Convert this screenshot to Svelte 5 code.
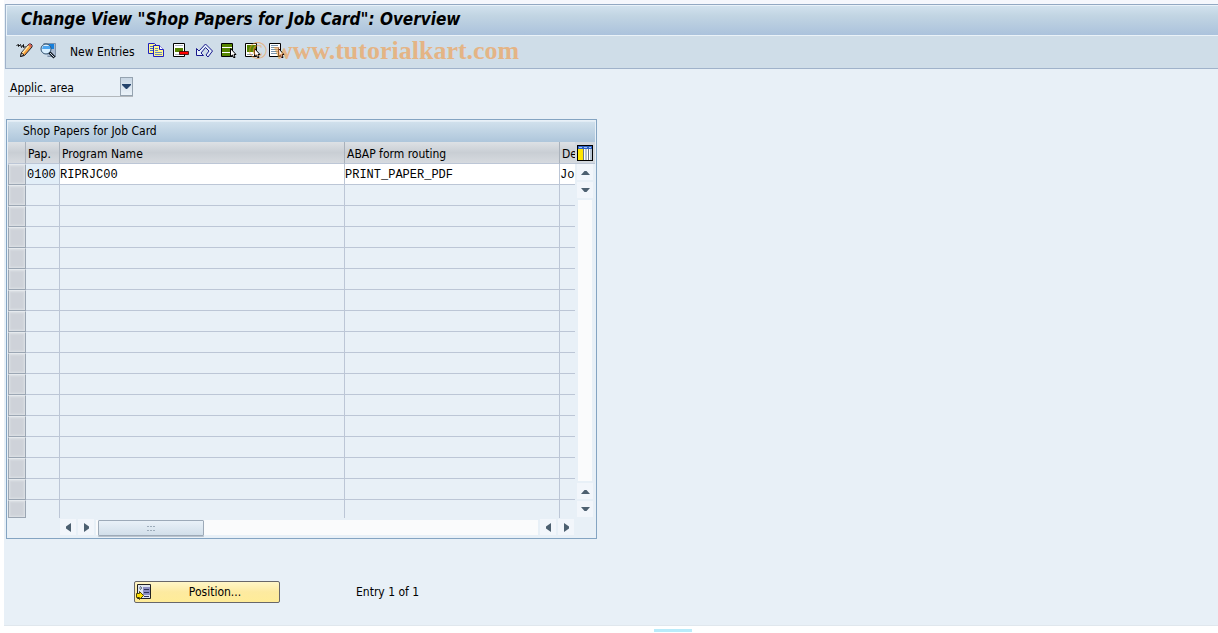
<script>
  const columns = ['Pap.', 'Program Name', 'ABAP form routing', 'De'];

  const entries = [
    { pap: '0100', program: 'RIPRJC00', routing: 'PRINT_PAPER_PDF', desc: 'Job' },
  ];

  // the control always shows 17 lines, filled or not
  const VISIBLE_ROWS = 17;
  const rows = Array.from({ length: VISIBLE_ROWS }, (_, i) => entries[i] ?? null);

  const tools = ['copy', 'delete', 'undo', 'selectAll', 'selectBlock', 'deselect'];
  const toolLabels = {
    copy: 'Copy As...',
    delete: 'Delete',
    undo: 'Undo Change',
    selectAll: 'Select All',
    selectBlock: 'Select Block',
    deselect: 'Deselect All',
  };
</script>

{#snippet cursor()}
  <path d="M10.500 6.500v8l2-1.500 1 2.500h1.500l-1-3h2z" fill="#fff" stroke="#000" />
{/snippet}

{#snippet arrow(dir)}
  <svg viewBox="0 0 9 9" width="9" height="9" aria-hidden="true">
    {#if dir === 'up'}
      <path d="M0 7h9L5.500 3h-2z" fill="#4d6070" />
    {:else if dir === 'down'}
      <path d="M0 2h9L5.500 6h-2z" fill="#4d6070" />
    {:else if dir === 'left'}
      <path d="M7 0v9L2 5.500v-2z" fill="#4d6070" />
    {:else}
      <path d="M2 0v9l5-3.500v-2z" fill="#4d6070" />
    {/if}
  </svg>
{/snippet}

{#snippet scrollButton(dir)}
  <button class="scroll-btn" aria-label="Scroll {dir}">{@render arrow(dir)}</button>
{/snippet}

<div class="window">
  <header class="titlebar">
    <h1>Change View "Shop Papers for Job Card": Overview</h1>
  </header>

  <div class="toolbar">
    <button class="tool" aria-label="Display/Change">
      <svg viewBox="0 0 17 17" width="17" height="17">
        <path d="M.5 3.500l2-1v2l2-2 1 3 2-3v3l2-1" fill="none" stroke="#111" />
        <path d="M4.500 14.500l1-4 7.500-8.500h2l1 1v2l-7.500 8.500z" fill="#f7a13c" stroke="#1c1c30" />
        <path d="M6.500 11l6-7" stroke="#ffeeb4" stroke-width="1.300" />
        <path d="M12.500 2.500l1-1 2.500 2-1.500 2z" fill="#d8635c" />
        <path d="M4.500 14.500l1-3.500 2.500 2z" fill="#fff" stroke="#000" stroke-width=".8" />
      </svg>
    </button>
    <button class="tool" aria-label="Other view">
      <svg viewBox="0 0 17 17" width="17" height="17">
        <path d="M3.500 1.500h12v13h-8" fill="#a9bad0" stroke="#7f93aa" />
        <path d="M4 2h10v5H4z" fill="#1680dc" />
        <circle cx="6" cy="7" r="5" fill="#d8efff" stroke="#30506e" />
        <path d="M3 4h7v3H2z" fill="#4ba5f0" />
        <path d="M9.500 10.500l5 5" stroke="#101820" stroke-width="3" />
        <path d="M10 11l4 4" stroke="#c6d6e6" />
      </svg>
    </button>
    <button class="tool text">New Entries</button>

    {#each tools as tool}
      <button class="tool" aria-label={toolLabels[tool]}>
        <svg viewBox="0 0 17 17" width="17" height="17">
          {#if tool === 'copy'}
            <path d="M.5 1.500h6l2 2v8h-8z" fill="#fff78c" stroke="#2020c0" />
            <path d="M2 4.500h3M2 6.500h3M2 8.500h3" stroke="#4770c8" />
            <path d="M5.500 3.500h6l4 4v7h-10z" fill="#fff78c" stroke="#2020c0" />
            <path d="M11.500 3.500v4h4" fill="#fff" stroke="#2020c0" />
            <path d="M7 6.500h3M7 8.500h3M7 10.500h7M7 12.500h7" stroke="#6685c0" />
          {:else if tool === 'delete'}
            <path d="M1.500 1.500h11v13h-11z" fill="#fff" stroke="#000" />
            <path d="M3 3.500h8M3 12.500h6" stroke="#aab3bd" />
            <path d="M3 6h8v4H3z" fill="#568500" />
            <path d="M7.500 9.500h9v3h-9z" fill="#f00" stroke="#300" stroke-width=".8" />
          {:else if tool === 'undo'}
            <path
              d="M.5 6.500v7h7l-2.500-2.500 4.500-5.500 3.500 3.500-3 4 2 2 4.500-6-7-7-6.500 7z"
              fill="#e4f0fa"
              stroke="#18188c"
            />
          {:else}
            <path d="M1.500 1.500h11v13h-11z" fill="#fff" stroke="#000" />
            {#if tool === 'selectAll'}
              <path d="M2 2h10v3H2zM2 6h10v4H2zM2 11h10v3H2z" fill="#568500" />
            {:else if tool === 'selectBlock'}
              <path d="M3 3h9v7H3z" fill="#568500" />
              <path d="M3 12.500h6" stroke="#8b98a4" />
            {:else}
              <path d="M3 3.500h7M3 5.500h8M3 7.500h7M3 9.500h7M3 11.500h6" stroke="#7893ad" />
            {/if}
            {@render cursor()}
          {/if}
        </svg>
      </button>
    {/each}
    <span class="watermark"><span class="mark">©</span>www.tutorialkart.com</span>
  </div>

  <main>
    <div class="field">
      <label for="area">Applic. area</label>
      <span class="drop">
        <select id="area"><option></option></select>
        <svg viewBox="0 0 9 5" width="9" height="5" aria-hidden="true">
          <path d="M0 0h9v1L5 5H4L0 1z" fill="#24446c" />
        </svg>
      </span>
    </div>

    <section class="panel">
      <h2>Shop Papers for Job Card</h2>
      <div class="grid">
        <table>
          <colgroup>
            <col class="c-sel" />
            <col class="c-pap" />
            <col class="c-prog" />
            <col class="c-rout" />
            <col />
          </colgroup>
          <thead>
            <tr>
              <th></th>
              {#each columns as col}
                <th>{col}</th>
              {/each}
            </tr>
          </thead>
          <tbody>
            {#each rows as row}
              <tr class:filled={row}>
                <td class="sel"></td>
                <td class="key">{row?.pap ?? ''}</td>
                <td>{row?.program ?? ''}</td>
                <td>{row?.routing ?? ''}</td>
                <td>{row?.desc ?? ''}</td>
              </tr>
            {/each}
          </tbody>
        </table>

        <div class="side">
          <button class="config" aria-label="Table settings">
            <svg viewBox="0 0 16 16" width="16" height="16">
              <path d="M0 0h16v16H0z" fill="#000" />
              <path d="M1 1h14v14H1z" fill="#fff" />
              <path d="M1 1h14v3H1z" fill="#2f62c4" />
              <path d="M2 2.500h3M7 2.500h3M12 2.500h2" stroke="#a9c6f4" />
              <path d="M1 4h5v11H1z" fill="#ffe600" />
              <path d="M8 4h2v11H8zM13 4h2v11h-2z" fill="#b9c6d4" />
              <path d="M6.500 4v11M11.500 4v11" stroke="#6a7786" />
            </svg>
          </button>
          <div class="vscroll">
            {@render scrollButton('up')}
            {@render scrollButton('down')}
            <div class="track"></div>
            {@render scrollButton('up')}
            {@render scrollButton('down')}
          </div>
        </div>
      </div>

      <div class="hscroll">
        {@render scrollButton('left')}
        {@render scrollButton('right')}
        <div class="track">
          <div class="thumb">
            <svg viewBox="0 0 9 6" width="9" height="6" aria-hidden="true">
              <path d="M0 1.500h2M3 1.500h2M6 1.500h2M0 5.500h2M3 5.500h2M6 5.500h2" stroke="#9dacba" />
            </svg>
          </div>
        </div>
        {@render scrollButton('left')}
        {@render scrollButton('right')}
      </div>
    </section>

    <div class="footer">
      <button class="position">
        <svg viewBox="0 0 16 16" width="16" height="16" aria-hidden="true">
          <path d="M1.500.5h13v14h-13z" fill="#dfe6f0" stroke="#222" />
          <path d="M7 3h7v8H7z" fill="#8c8fc4" />
          <path d="M8 5.500h5M8 8.500h5M8 12.500h5" stroke="#30365c" />
          <path d="M3 4h3M4 2l2 2-2 2" fill="none" stroke="#6c7a90" />
          <path d="M.5 9.500h3v-2l4 4-4 4v-2h-3z" fill="#ffe100" stroke="#4d4300" />
        </svg>
        <span>Position...</span>
      </button>
      <span>Entry 1 of 1</span>
    </div>
  </main>
</div>
<div class="tab"></div>

<style>
  :global(body) {
    background: #fff;
  }

  .window {
    margin-left: 4px;
    border-top: 4px solid #f5f7fc;
    border-bottom: 1px solid #e0e7ed;
    background: #e8f0f7;
    font-family: 'DejaVu Sans Condensed', 'DejaVu Sans', sans-serif;
    font-size: 12px;
    line-height: 16px;
    color: #000;
  }

  button {
    padding: 0;
    border: 0;
    background: none;
    font: inherit;
    color: inherit;
  }

  svg {
    display: block;
    flex: none;
  }

  /* ---- title + toolbar ---- */
  .titlebar {
    display: flex;
    align-items: center;
    box-sizing: border-box;
    height: 31px;
    margin-left: 1px;
    padding: 0 15px 2px;
    border-top: 1px solid #92a8c2;
    border-left: 1px solid #9fb3ca;
    background: linear-gradient(#d3e3ef, #c2d5e3 35%, #abc2dc);
    box-shadow: inset 1px 1px 0 #e9f2f9;
  }
  h1 {
    margin: 0;
    font-size: 17px;
    font-style: italic;
    font-weight: 700;
    line-height: 20px;
    white-space: nowrap;
  }

  .toolbar {
    position: relative;
    display: flex;
    align-items: center;
    gap: 7px;
    box-sizing: border-box;
    height: 34px;
    margin-left: 1px;
    padding: 0 10px 2px;
    border: 1px solid #a0b2ca;
    border-width: 0 0 1px 1px;
    background: #cfdde8;
    box-shadow: inset 0 1px 0 #eaf2f8;
  }
  .tool.text {
    margin: 2px 6px 0;
    white-space: nowrap;
  }

  .watermark {
    position: absolute;
    left: 242px;
    top: 0;
    display: flex;
    gap: 6px;
    font-family: 'Liberation Serif', serif;
    font-size: 26px;
    font-weight: 700;
    line-height: 32px;
    color: #f39a45;
    opacity: 0.6;
    white-space: nowrap;
    pointer-events: none;
  }
  .mark {
    font-weight: 400;
  }

  /* ---- selection field ---- */
  main {
    padding: 8px 2px 22px;
  }
  .field {
    display: flex;
    align-items: flex-end;
    width: 125px;
    margin-left: 2px;
    border-bottom: 1px solid #b3b8bc;
  }
  .field label {
    flex: 1;
    padding-left: 2px;
  }
  .drop {
    position: relative;
    display: flex;
    width: 13px;
    height: 19px;
  }
  .drop select {
    box-sizing: border-box;
    width: 100%;
    margin: 0;
    padding: 0;
    border: 1px solid #95a3b0;
    border-radius: 0;
    background: linear-gradient(#c9d7e4, #eaf2f9);
    appearance: none;
  }
  .drop svg {
    position: absolute;
    left: 2px;
    top: 7px;
    pointer-events: none;
  }

  /* ---- table control ---- */
  .panel {
    box-sizing: border-box;
    width: 591px;
    margin-top: 22px;
    padding: 1px;
    border: 1px solid #84a4c2;
  }
  h2 {
    margin: 0;
    padding: 1px 15px 3px;
    border-top: 1px solid #e1ecf5;
    background: linear-gradient(#d0e0ec, #aec6db);
    font-size: 12px;
    font-weight: 400;
    line-height: 16px;
  }
  .grid {
    display: flex;
  }

  table {
    flex: 1;
    width: 0;
    table-layout: fixed;
    border-collapse: separate;
    border-spacing: 0;
  }
  .c-sel {
    width: 18px;
  }
  .c-pap {
    width: 34px;
  }
  .c-prog {
    width: 285px;
  }
  .c-rout {
    width: 215px;
  }
  th,
  td {
    box-sizing: border-box;
    height: 21px;
    padding: 1px 0 0;
    overflow: hidden;
    border-right: 1px solid #bcc6d6;
    border-bottom: 1px solid #bcc6d6;
    text-align: left;
    white-space: nowrap;
  }
  th {
    height: 22px;
    padding: 2px 0 0 2px;
    border-right-color: #a9b1bb;
    background: linear-gradient(#dde1e5, #c9ced4 50%, #d6dadf);
    font-weight: 400;
  }
  td {
    font-family: 'Liberation Mono', monospace;
    font-size: 12px;
  }
  td.key {
    padding-left: 1px;
  }
  th:last-child,
  td:last-child {
    border-right: 0;
  }
  .filled td {
    background: #fff;
  }
  .filled .key {
    background: #e2eef8;
  }
  td.sel {
    border: 1px solid #9ba6b3;
    border-top-color: #e6eaee;
    background: #ced2d9;
    box-shadow: inset 0 0 2px 1px #dee2e6;
  }
  tbody tr:last-child td {
    height: 18px;
    line-height: 15px;
  }
  tbody tr:last-child td:not(.sel) {
    border-bottom: 0;
  }

  .side {
    display: flex;
    flex-direction: column;
    width: 20px;
    background: #e8f0f7;
  }
  .config {
    display: flex;
    align-items: center;
    box-sizing: border-box;
    height: 22px;
    padding-left: 2px;
    border-bottom: 1px solid #bcc6d6;
    background: #d3d8de;
  }
  .vscroll {
    flex: 1;
    display: flex;
    flex-direction: column;
    align-items: flex-end;
    gap: 2px;
    padding: 0 2px 1px;
  }
  .scroll-btn {
    display: flex;
    align-items: center;
    justify-content: center;
    flex: none;
    width: 16px;
    height: 16px;
    background: #f2f6fb;
  }
  .track {
    flex: 1;
    background: #fafbfc;
  }
  .vscroll .track {
    width: 14px;
    margin-right: 1px;
  }
  .hscroll {
    display: flex;
    align-items: center;
    gap: 2px;
    padding: 1px 21px 2px 52px;
  }
  .hscroll .track {
    height: 15px;
    padding-left: 2px;
  }
  .thumb {
    display: flex;
    align-items: center;
    justify-content: center;
    box-sizing: border-box;
    width: 106px;
    height: 16px;
    border: 1px solid #9daab8;
    border-radius: 1px;
    background: linear-gradient(#e9f1f8, #d2dfea);
    box-shadow: 0 1px 0 #b9c3cd;
  }

  /* ---- footer ---- */
  .footer {
    display: flex;
    align-items: center;
    gap: 76px;
    margin: 42px 0 0 128px;
  }
  .position {
    display: flex;
    align-items: center;
    box-sizing: border-box;
    width: 146px;
    height: 22px;
    padding: 0 1px;
    border: 1px solid #68676a;
    border-radius: 2px;
    background: linear-gradient(#fff6c8, #fdeaa0 50%, #ffec98);
  }
  .position span {
    flex: 1;
    text-align: center;
  }

  .tab {
    width: 38px;
    height: 3px;
    margin: 3px 0 0 654px;
    background: #b9ebfa;
  }
</style>
